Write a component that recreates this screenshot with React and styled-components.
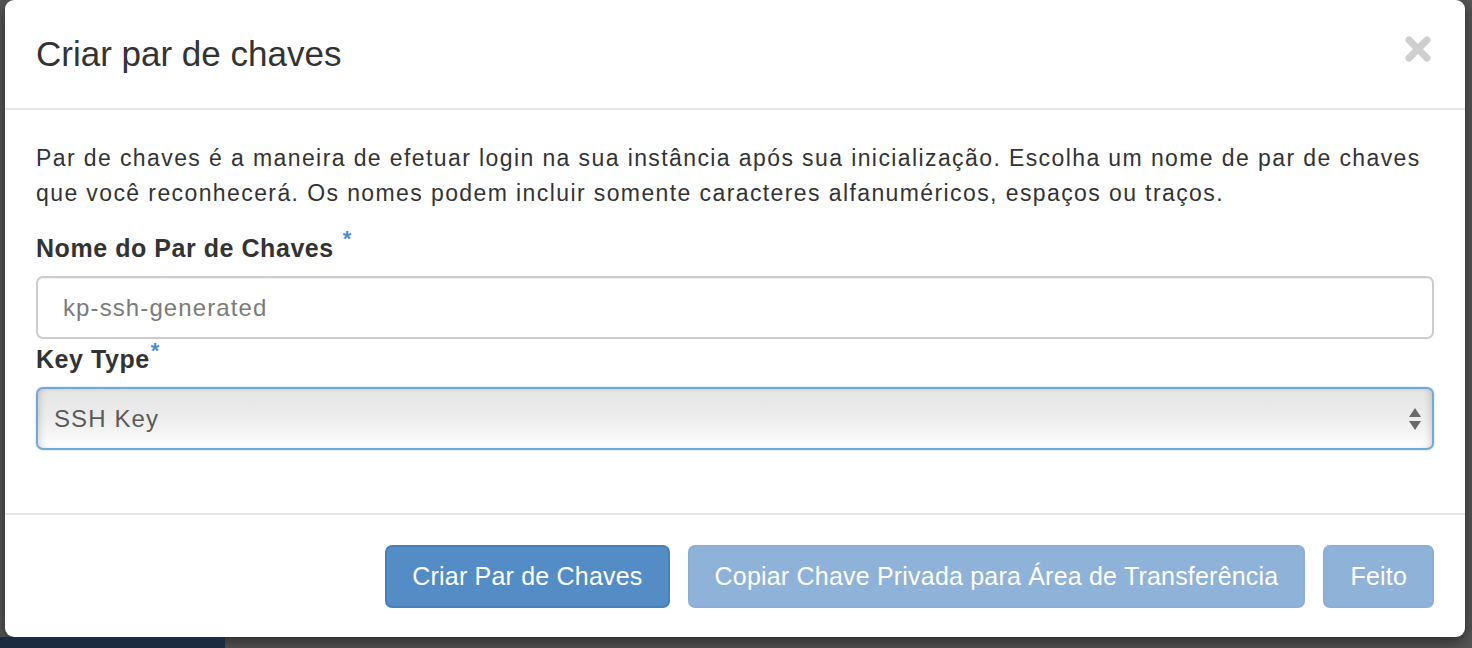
import React from 'react'
import styled, { createGlobalStyle } from 'styled-components'

const GlobalStyle = createGlobalStyle`
  html, body {
    margin: 0;
    padding: 0;
    background: #565656;
    font-family: "Liberation Sans", Arial, Helvetica, sans-serif;
  }
  * {
    box-sizing: border-box;
  }
`

const Page = styled.div`
  width: 1472px;
  height: 648px;
  overflow: hidden;
  display: flex;
  flex-direction: column;
  background: #565656;
`

const Stage = styled.div`
  height: 637px;
  padding: 0 7px 0 5px;
  display: flex;
`

const Modal = styled.div`
  flex: 1;
  background: #fff;
  border-radius: 9px;
  box-shadow: 0 5px 15px rgba(0, 0, 0, 0.5);
  display: flex;
  flex-direction: column;
`

const Header = styled.div`
  height: 110px;
  padding: 0 31px;
  display: flex;
  align-items: center;
  justify-content: space-between;
  border-bottom: 2px solid #e5e5e5;
`

const Title = styled.h4`
  margin: 0;
  font-size: 35px;
  font-weight: 400;
  color: #333;
`

const Close = styled.button`
  border: 0;
  background: none;
  padding: 0;
  margin: 0 2px 10px 0;
  width: 28px;
  height: 28px;
  display: flex;
  align-items: center;
  justify-content: center;
`

const Body = styled.div`
  flex: 1;
  padding: 31px 31px 0;
`

const Description = styled.p`
  margin: 0 0 22px;
  font-size: 23px;
  letter-spacing: 1.4px;
  line-height: 35px;
  color: #333;
`

const Field = styled.div`
  margin-bottom: 5px;
`

const Label = styled.label`
  display: block;
  font-size: 25px;
  letter-spacing: 0.55px;
  font-weight: 700;
  color: #333;
  line-height: 30px;
  margin-bottom: 13px;
`

const Star = styled.span`
  display: inline-block;
  color: #4a8cd3;
  font-size: 22px;
  line-height: 0;
  margin-left: ${(p) => (p.$tight ? '1px' : '9px')};
  position: relative;
  top: ${(p) => (p.$tight ? '-10px' : '-11px')};
`

const Input = styled.input`
  display: block;
  width: 100%;
  height: 63px;
  padding: 0 25px;
  border: 2px solid #ccc;
  border-radius: 7px;
  font-family: inherit;
  font-size: 24px;
  letter-spacing: 1.1px;
  color: #555;
  box-shadow: inset 0 1px 1px rgba(0, 0, 0, 0.075);
  &::placeholder {
    color: #7b7b7b;
  }
`

const SelectBox = styled.div`
  height: 63px;
  border: 2px solid #6fa9e0;
  border-radius: 7px;
  background: linear-gradient(#e4e4e4 0%, #ececec 45%, #fafafa 90%, #fff 100%);
  box-shadow: inset 5px 0 6px -3px rgba(0, 0, 0, 0.15), inset -5px 0 6px -3px rgba(0, 0, 0, 0.15),
    0 0 2px rgba(102, 175, 233, 0.6);
  display: flex;
  align-items: center;
  justify-content: space-between;
  padding: 0 10px 0 16px;
  font-size: 24px;
  letter-spacing: 1.1px;
  color: #5a5a5a;
`

const Arrows = styled.svg`
  display: block;
`

const Footer = styled.div`
  border-top: 2px solid #e5e5e5;
  padding: 30px 31px 29px;
  display: flex;
  justify-content: flex-end;
  gap: 18px;
`

const Button = styled.button`
  height: 63px;
  padding: 0 25px;
  border-radius: 7px;
  border: 2px solid ${(p) => (p.disabled ? '#8aaed6' : '#4a7fba')};
  background: ${(p) => (p.disabled ? '#8fb2d9' : '#548cc6')};
  color: #fff;
  font-family: inherit;
  font-size: 25px;
  letter-spacing: 0.2px;
  cursor: ${(p) => (p.disabled ? 'not-allowed' : 'pointer')};
`

const Behind = styled.div`
  flex: 1;
  display: flex;
`

const Sidebar = styled.div`
  width: 225px;
  background: #1c2b40;
`

const App = () => {
  return (
    <>
      <GlobalStyle />
      <Page>
        <Stage>
          <Modal>
            <Header>
              <Title>Criar par de chaves</Title>
              <Close aria-label="Fechar">
                <svg width="28" height="28" viewBox="0 0 28 28">
                  <path
                    d="M5 5 L23 23 M23 5 L5 23"
                    stroke="#cfcfcf"
                    strokeWidth="7"
                    strokeLinecap="round"
                  />
                </svg>
              </Close>
            </Header>
            <Body>
              <Description>
                Par de chaves é a maneira de efetuar login na sua instância após sua inicialização. Escolha um nome
                de par de chaves que você reconhecerá. Os nomes podem incluir somente caracteres alfanuméricos,
                espaços ou traços.
              </Description>
              <Field>
                <Label>
                  Nome do Par de Chaves<Star>*</Star>
                </Label>
                <Input placeholder="kp-ssh-generated" />
              </Field>
              <Field>
                <Label>
                  Key Type<Star $tight>*</Star>
                </Label>
                <SelectBox>
                  <span>SSH Key</span>
                  <Arrows width="14" height="26" viewBox="0 0 14 26">
                    <path d="M7 2 L13 11 L1 11 Z" fill="#6a6a6a" />
                    <path d="M1 15 L13 15 L7 24 Z" fill="#6a6a6a" />
                  </Arrows>
                </SelectBox>
              </Field>
            </Body>
            <Footer>
              <Button>Criar Par de Chaves</Button>
              <Button disabled>Copiar Chave Privada para Área de Transferência</Button>
              <Button disabled>Feito</Button>
            </Footer>
          </Modal>
        </Stage>
        <Behind>
          <Sidebar />
        </Behind>
      </Page>
    </>
  )
}

export default App
